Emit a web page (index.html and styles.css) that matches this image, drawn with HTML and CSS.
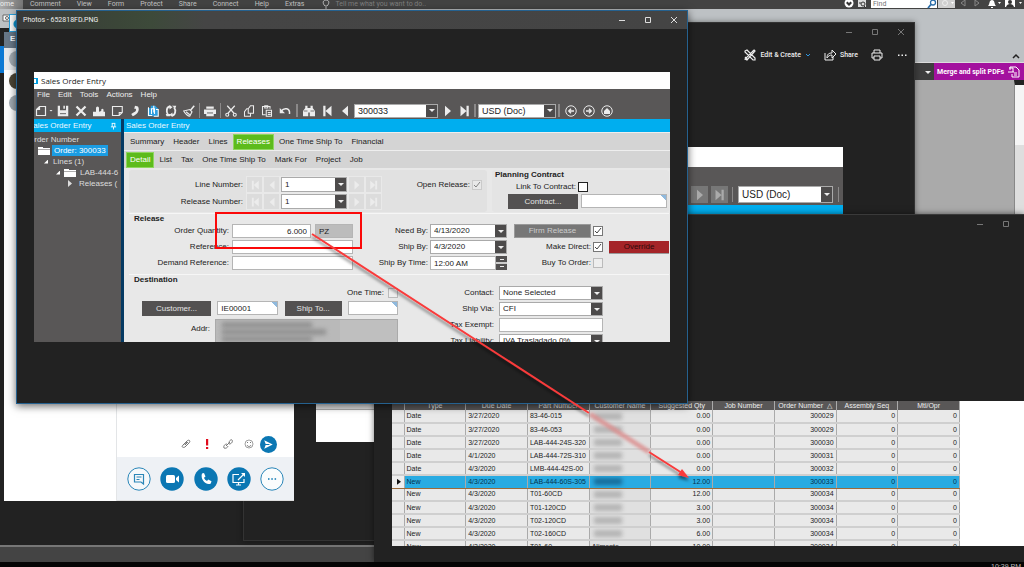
FILE: index.html
```html
<!DOCTYPE html>
<html lang="en">
<head>
<meta charset="utf-8">
<title>Sales Order Entry</title>
<link rel="stylesheet" href="styles.css">
</head>
<body>
<svg class="defs" aria-hidden="true">
  <symbol id="min" viewBox="0 0 8 8"><path d="M1 4.5h6" stroke="currentColor" fill="none"/></symbol>
  <symbol id="max" viewBox="0 0 8 8"><path d="M1.5 1.5h5v5h-5z" stroke="currentColor" fill="none"/></symbol>
  <symbol id="close" viewBox="0 0 8 8"><path d="M1 1l6 6M7 1L1 7" stroke="currentColor" fill="none"/></symbol>
  <symbol id="new" viewBox="0 0 16 16"><path d="M6 2h8v12H2V6zM6 2v4H2" fill="none" stroke="currentColor" stroke-width="1.6"/></symbol>
  <symbol id="save" viewBox="0 0 16 16"><path d="M1 1h3v6h8V1h3v14H1z" fill="currentColor"/><path d="M8.500 1h2v4h-2z" fill="currentColor"/><path d="M4 11h8v1.200H4z" fill="#595757"/></symbol>
  <symbol id="del" viewBox="0 0 16 16"><path d="M2 2l12 12M14 2L2 14" stroke="currentColor" stroke-width="3"/></symbol>
  <symbol id="people" viewBox="0 0 16 16"><path d="M0 15V9h4V4a2 2 0 014 0v5l3-1V6a2 2 0 013 0v3h2v6z" fill="currentColor"/></symbol>
  <symbol id="note" viewBox="0 0 16 16"><path d="M2 2h13v8l-4 4H2zM11 14v-4h4" fill="none" stroke="currentColor" stroke-width="1.500"/></symbol>
  <symbol id="phone" viewBox="0 0 16 16"><path d="M8 1l4 1c3 5-1 11-7 13l-2-3 3-2c3-1 4-3 3-5H7z" fill="currentColor"/></symbol>
  <symbol id="attach" viewBox="0 0 16 16"><path d="M1 4h4V1h6l4 4v10H1z" fill="#2f9fe0"/><path d="M2 3v11h5M9 1v9M6 12V5h4v7M12 6h3v9H9" fill="none" stroke="#fff" stroke-width="1.400"/></symbol>
  <symbol id="refresh" viewBox="0 0 16 16"><path d="M7 2C2 2 1 9 4 13M9 14c5 0 6-7 3-11" fill="none" stroke="currentColor" stroke-width="2.400"/><path d="M6 0l4 3-4 3zM10 10v6l-4-3zM1 12h6v3H2zM9 1h6l-1 3z" fill="currentColor"/></symbol>
  <symbol id="brush" viewBox="0 0 16 16"><path d="M15 1l-5 6" stroke="currentColor" stroke-width="2"/><path d="M1 8l8-2 3 3-3 6c-2 0-6-3-8-7zM4 9l5 4" fill="none" stroke="currentColor" stroke-width="1.500"/></symbol>
  <symbol id="print" viewBox="0 0 16 16"><path d="M3 2h10v3H3zM0 6h16v6h-3v3H3v-3H0z" fill="currentColor"/><path d="M4 10h8v1.200H4z" fill="#595757"/></symbol>
  <symbol id="cut" viewBox="0 0 16 16"><path d="M3 1l9 10M13 1L4 11" stroke="currentColor" stroke-width="1.600"/><circle cx="3" cy="13" r="2" fill="none" stroke="currentColor" stroke-width="1.500"/><circle cx="13" cy="13" r="2" fill="none" stroke="currentColor" stroke-width="1.500"/></symbol>
  <symbol id="copy" viewBox="0 0 16 16"><path d="M7 5l3-4h4v10H7zM7 5H5L2 9v6h8v-4M7 5v3" fill="none" stroke="currentColor" stroke-width="1.400"/></symbol>
  <symbol id="paste" viewBox="0 0 16 16"><path d="M6 13H2V2h10v3M5 1h4v3H5zM7 7h7v8H7zM9 10h4M9 12.500h4" fill="none" stroke="currentColor" stroke-width="1.400"/></symbol>
  <symbol id="undo" viewBox="0 0 16 16"><path d="M3 8c4-5 12-4 11 4" fill="none" stroke="currentColor" stroke-width="2"/><path d="M1 4v7h7z" fill="currentColor"/></symbol>
  <symbol id="find" viewBox="0 0 16 16"><path d="M3 1h3v3h4V1h3v3l3 4v7H9v-5H7v5H0V8l3-4z" fill="currentColor"/><path d="M1 8h5M10 8h5" stroke="#595757"/></symbol>
  <symbol id="first" viewBox="0 0 16 16"><path d="M3 1h3v14H3zM14 1v14L6 8z" fill="currentColor"/></symbol>
  <symbol id="prev" viewBox="0 0 16 16"><path d="M12 1v14L4 8z" fill="currentColor"/></symbol>
  <symbol id="next" viewBox="0 0 16 16"><path d="M4 1v14l8-7z" fill="currentColor"/></symbol>
  <symbol id="last" viewBox="0 0 16 16"><path d="M10 1h3v14h-3zM2 1v14l8-7z" fill="currentColor"/></symbol>
  <symbol id="back" viewBox="0 0 16 16"><circle cx="8" cy="8" r="7" fill="none" stroke="currentColor" stroke-width="1.300"/><path d="M12 8H5M8 5L5 8l3 3" fill="none" stroke="currentColor" stroke-width="1.800"/></symbol>
  <symbol id="fwd" viewBox="0 0 16 16"><circle cx="8" cy="8" r="7" fill="none" stroke="currentColor" stroke-width="1.300"/><path d="M4 8h7M8 5l3 3-3 3" fill="none" stroke="currentColor" stroke-width="1.800"/></symbol>
  <symbol id="home" viewBox="0 0 16 16"><circle cx="8" cy="8" r="7" fill="none" stroke="currentColor" stroke-width="1.300"/><path d="M4 8l4-4 4 4v4H4z" fill="currentColor"/></symbol>
  <symbol id="folder" viewBox="0 0 12 10"><path d="M0 1h5v1h7v1.500H0zM0 4h12v5H0z" fill="#fff"/></symbol>
</svg>

<main class="desktop">
  <section class="pdf" aria-label="PDF editor">
    <nav class="ribbon">
      <a class="home" href="#">ome</a>
      <a href="#">Comment</a><a href="#">View</a><a href="#">Form</a><a href="#">Protect</a><a href="#">Share</a><a href="#">Connect</a><a href="#">Help</a><a href="#">Extras</a>
      <svg class="bulb" viewBox="0 0 8 10"><path d="M3 7C0 4 1 1 4 1s4 3 1 6zM3 9h2" fill="none" stroke="#bbb"/></svg>
      <span class="tell">Tell me what you want to do..</span>
      <svg class="heart" viewBox="0 0 24 10"><circle cx="6" cy="3" r="4.500" fill="#fff"/><path d="M6 6L3 3l1.500-1.500L6 3l1.500-1.500L9 3z" fill="#333"/><path d="M15 0h8v7h-8z" fill="#ddd"/><circle cx="20" cy="4" r="2" fill="none" stroke="#333"/><path d="M16 3h2M21 6l2 2" stroke="#333"/></svg>
      <label class="find"><input type="text" placeholder="Find" aria-label="Find"><svg viewBox="0 0 10 10"><circle cx="6" cy="2.500" r="2.500" fill="none" stroke="#2a6ca8" stroke-width="1.300"/><path d="M4 4.500L1 8" stroke="#2a6ca8" stroke-width="1.800"/></svg></label>
      <svg class="tools" viewBox="0 0 86 10"><path d="M0 0h17v8H0z" fill="#cfcfcf"/><circle cx="7" cy="3" r="2.500" fill="none" stroke="#eee"/><path d="M13 2h3l-1.500 2z" fill="#fff"/><path d="M27 0v6l-4-3zM37 0v6l4-3z" fill="none" stroke="#888"/><path d="M50 6c2-2 1-6 4-6s2 4 4 6zM53 7h2v1h-2z" fill="#fff"/><path d="M60 2h3l-1.500 2zM81 2h3l-1.500 2z" fill="#fff"/><path d="M67 0h10v7H67z" fill="#fff"/><circle cx="72" cy="2" r="2" fill="#333"/><path d="M68 7c1-4 7-4 8 0z" fill="#333"/></svg>
    </nav>
    <div class="ribbon-body"><svg class="camera" viewBox="0 0 8 8"><path d="M1 1h7v6H1z" fill="#fff" stroke="#666"/><circle cx="5" cy="4" r="1.500" fill="none" stroke="#666"/></svg><svg viewBox="0 0 8 8"><path d="M1 6l3-3 3 3" fill="none" stroke="#222" stroke-width="1.500"/></svg></div>
    <div class="promo"><i></i><a href="#">Merge and split PDFs <svg viewBox="0 0 12 12"><path d="M2 4V1h6l3 3v7H4V8M0 6h6M1 2h4v4M6 7h3M6 9h3" fill="none" stroke="#fff"/></svg></a></div>
    <div class="doc"><div class="scroll"><span></span></div></div>
    <div class="status"></div>
    <div class="taskbar"><time>10:39 PM</time></div>
  </section>

  <section class="win photos-far" aria-label="Photos"><div class="strip"></div></section>

  <section class="win photos-back" aria-label="Photos">
    <header class="bar right">
      <button aria-label="Minimize"><svg><use href="#min"/></svg></button><button aria-label="Maximize"><svg><use href="#max"/></svg></button><button aria-label="Close"><svg><use href="#close"/></svg></button>
    </header>
    <div class="actions">
      <button><svg viewBox="0 0 12 12"><path d="M1 2l2-1 8 8v2H9L1 3zM10 1l1 1-8 9-2-1zM1 8l2 2M8 2l2 2" fill="none" stroke="#eee" stroke-width="1.200"/></svg>Edit &amp; Create<svg class="chev" viewBox="0 0 6 6"><path d="M1 2l2 2 2-2" fill="none" stroke="#2f95e0"/></svg></button>
      <button><svg viewBox="0 0 12 12"><path d="M1 4v7h8V8M3 9c0-4 2-5 5-5V1l4 4-4 4V6C6 6 4 7 3 9z" fill="none" stroke="#eee"/></svg>Share</button>
      <button aria-label="Print"><svg viewBox="0 0 12 12"><path d="M3 4V1h6v3M3 9H1V4h10v5H9M3 7h6v4H3z" fill="none" stroke="#eee"/></svg></button>
      <button aria-label="More"><svg viewBox="0 0 12 12"><path d="M2 5.500h1.500v1.500H2zM5.500 5.500H7v1.500H5.500zM9 5.500h1.500v1.500H9z" fill="#eee"/></svg></button>
    </div>
    <div class="back-image">
      <div class="white-title"></div>
      <div class="back-tools">
        <button aria-label="Next"><svg><use href="#next"/></svg></button><button aria-label="Last"><svg><use href="#last"/></svg></button>
        <i class="grip"></i>
        <div class="combo"><select aria-label="Currency"><option>USD (Doc)</option></select></div>
        <i class="grip"></i>
      </div>
      <div class="blue"></div>
      <div class="back-row"></div>
    </div>
  </section>

  <div class="win peek" aria-hidden="true"></div>

  <section class="win chat" aria-label="Chat">
    <div class="people">
      <div class="people-head">E</div>
      <div class="person on"><i></i></div><div class="person photo"><i></i></div><div class="person"><i></i></div>
    </div>
    <div class="talk">
      <div class="compose">
        <button aria-label="Attach file"><svg viewBox="0 0 10 10"><path d="M2 6l4-4c2-2 4 0 2 2L4 8C2 9 0 8 2 6l4-3M4 6l3-3" fill="none" stroke="#777"/></svg></button>
        <button aria-label="High importance"><svg viewBox="0 0 10 10"><path d="M4 0h2.200v6.500H4zM4 8h2.200v2H4z" fill="#e00b1c"/></svg></button>
        <button aria-label="Link"><svg viewBox="0 0 10 10"><path d="M1 9c-1-2 1-4 3-4M1 9c2 1 4-1 4-2M6 4c0-2 2-4 3-3s0 4-3 4M3 7l4-4" fill="none" stroke="#777"/></svg></button>
        <button aria-label="Emoji"><svg viewBox="0 0 10 10"><circle cx="5" cy="5" r="4" fill="none" stroke="#888" stroke-width=".8"/><path d="M3 6c1 2 3 2 4 0M3 3.500h1M6 3.500h1" fill="none" stroke="#777"/></svg></button>
        <button class="send" aria-label="Send"><svg viewBox="0 0 18 18"><circle cx="9" cy="9" r="9" fill="#0b77b3"/><path d="M4.500 4.500l9 4.500-9 4.500L6 9.600h4V8.400H6z" fill="#fff"/></svg></button>
      </div>
      <div class="calls">
        <button aria-label="Message"><svg viewBox="0 0 24 24"><circle cx="12" cy="12" r="11.200" fill="#f5f8fa" stroke="#2a86b8"/><path d="M7.500 7.500h9v9.500l-2.500-2H7.500zM9.500 10h5M9.500 12.500h3" fill="none" stroke="#2a86b8" stroke-width="1.200"/></svg></button>
        <button aria-label="Video"><svg viewBox="0 0 24 24"><circle cx="12" cy="12" r="11.700" fill="#0b77b3"/><rect x="6" y="8" width="9" height="8" rx="1.500" fill="#fff"/><path d="M16 11l3-2.500v7L16 13z" fill="#fff"/></svg></button>
        <button aria-label="Call"><svg viewBox="0 0 24 24"><circle cx="12" cy="12" r="11.700" fill="#0b77b3"/><path d="M8 6.500l2-.5 1.500 3.500-1.500 1.200c.5 1.500 1.500 2.500 3 3.200l1.200-1.400 3.300 1.800-.7 2.200C12 19 6 12 8 6.500z" fill="#fff"/></svg></button>
        <button aria-label="Present"><svg viewBox="0 0 24 24"><circle cx="12" cy="12" r="11.700" fill="#0b77b3"/><path d="M12 7.500H6v8h11V12M9 18h5M11.500 16v2M11 13l6-6" fill="none" stroke="#fff" stroke-width="1.200"/><path d="M14 6h4v4z" fill="#fff"/></svg></button>
        <button aria-label="More"><svg viewBox="0 0 24 24"><circle cx="12" cy="12" r="11.200" fill="#fafcfd" stroke="#2a86b8"/><path d="M8 12h1.500M11.300 12h1.500M14.600 12h1.500" stroke="#0b77b3" stroke-width="1.500"/></svg></button>
      </div>
    </div>
  </section>

  <section class="win photos-grid" aria-label="Photos">
    <header class="bar right"><button aria-label="Minimize"><svg><use href="#min"/></svg></button><button aria-label="Maximize"><svg><use href="#max"/></svg></button></header>
    <div class="sheet">
      <table>
        <thead><tr><th></th><th>Type</th><th>Due Date</th><th>Part Number</th><th>Customer Name</th><th>Suggested Qty</th><th>Job Number</th><th>Order Number &nbsp;△</th><th>Assembly Seq</th><th>Mtl/Opr</th></tr></thead>
        <tbody>
          <tr><td></td><td>Date</td><td>3/27/2020</td><td>83-46-015</td><td><i></i></td><td>0.00</td><td></td><td>300029</td><td>0</td><td>0</td></tr>
          <tr><td></td><td>Date</td><td>3/27/2020</td><td>83-46-053</td><td><i></i></td><td>0.00</td><td></td><td>300029</td><td>0</td><td>0</td></tr>
          <tr><td></td><td>Date</td><td>3/27/2020</td><td>LAB-444-24S-320</td><td><i></i></td><td>0.00</td><td></td><td>300030</td><td>0</td><td>0</td></tr>
          <tr><td></td><td>Date</td><td>4/1/2020</td><td>LAB-444-72S-310</td><td><i></i></td><td>0.00</td><td></td><td>300031</td><td>0</td><td>0</td></tr>
          <tr><td></td><td>Date</td><td>4/3/2020</td><td>LMB-444-42S-00</td><td><i></i></td><td>0.00</td><td></td><td>300032</td><td>0</td><td>0</td></tr>
          <tr class="sel"><td><b></b></td><td>New</td><td>4/3/2020</td><td>LAB-444-60S-305</td><td><i></i></td><td>12.00</td><td></td><td>300033</td><td>0</td><td>0</td></tr>
          <tr><td></td><td>New</td><td>4/3/2020</td><td>T01-60CD</td><td><i></i></td><td>12.00</td><td></td><td>300034</td><td>0</td><td>0</td></tr>
          <tr><td></td><td>New</td><td>4/3/2020</td><td>T01-120CD</td><td><i></i></td><td>3.00</td><td></td><td>300034</td><td>0</td><td>0</td></tr>
          <tr><td></td><td>New</td><td>4/3/2020</td><td>T02-120CD</td><td><i></i></td><td>3.00</td><td></td><td>300034</td><td>0</td><td>0</td></tr>
          <tr><td></td><td>New</td><td>4/3/2020</td><td>T02-160CD</td><td><i></i></td><td>6.00</td><td></td><td>300034</td><td>0</td><td>0</td></tr>
          <tr><td></td><td>New</td><td>4/3/2020</td><td>T01-60</td><td>Alimento</td><td>10.00</td><td></td><td>300034</td><td>0</td><td>0</td></tr>
        </tbody>
      </table>
    </div>
  </section>

  <section class="win photos-front" aria-label="Photos">
    <header class="bar">
      <h1>Photos - 652818FD.PNG</h1>
      <button aria-label="Minimize"><svg><use href="#min"/></svg></button><button aria-label="Maximize"><svg><use href="#max"/></svg></button><button aria-label="Close"><svg><use href="#close"/></svg></button>
    </header>
    <div class="app">
      <div class="app-title"><i></i>Sales Order Entry</div>
      <nav class="menu"><a href="#">File</a><a href="#">Edit</a><a href="#">Tools</a><a href="#">Actions</a><a href="#">Help</a></nav>
      <div class="tools-row">
        <button class="narrow" aria-label="New"><svg><use href="#new"/></svg></button><i class="drop"></i>
        <button aria-label="Save"><svg><use href="#save"/></svg></button>
        <button aria-label="Delete"><svg><use href="#del"/></svg></button>
        <button aria-label="Contacts"><svg><use href="#people"/></svg></button>
        <button aria-label="Note"><svg><use href="#note"/></svg></button>
        <button aria-label="Call"><svg><use href="#phone"/></svg></button>
        <button aria-label="Attachment"><svg><use href="#attach"/></svg></button>
        <button aria-label="Refresh"><svg><use href="#refresh"/></svg></button>
        <button aria-label="Clear"><svg><use href="#brush"/></svg></button>
        <i class="grip"></i>
        <button aria-label="Print"><svg><use href="#print"/></svg></button>
        <i class="grip"></i>
        <button aria-label="Cut"><svg><use href="#cut"/></svg></button>
        <button aria-label="Copy"><svg><use href="#copy"/></svg></button>
        <button aria-label="Paste"><svg><use href="#paste"/></svg></button>
        <button aria-label="Undo"><svg><use href="#undo"/></svg></button>
        <i class="grip wide"></i>
        <button aria-label="Search"><svg><use href="#find"/></svg></button>
        <button aria-label="First"><svg><use href="#first"/></svg></button>
        <button aria-label="Previous"><svg><use href="#prev"/></svg></button>
        <div class="combo order"><select aria-label="Order"><option>300033</option></select></div>
        <button aria-label="Next"><svg><use href="#next"/></svg></button>
        <button class="tight" aria-label="Last"><svg><use href="#last"/></svg></button>
        <i class="grip wide"></i>
        <div class="combo currency"><select aria-label="Currency"><option>USD (Doc)</option></select></div>
        <i class="grip wide"></i>
        <button aria-label="Back"><svg><use href="#back"/></svg></button>
        <button aria-label="Forward"><svg><use href="#fwd"/></svg></button>
        <button aria-label="Home"><svg><use href="#home"/></svg></button>
      </div>
      <div class="panes">
        <aside class="tree">
          <div class="blue"><span class="cut">Sales Order Entry</span><svg viewBox="0 0 8 8"><path d="M2 1h4M2.500 1v4M5.500 1v4M1 5h6M4 5v3" stroke="#fff" fill="none"/></svg></div>
          <ul>
            <li class="cut-item">Order Number</li>
            <li class="lvl1"><svg class="fold"><use href="#folder"/></svg><a class="on" href="#">Order: 300033</a></li>
            <li class="lvl2"><i class="open"></i>Lines (1)</li>
            <li class="lvl3"><i class="open"></i><svg class="fold"><use href="#folder"/></svg>LAB-444-6</li>
            <li class="lvl4"><i class="closed"></i>Releases (</li>
          </ul>
        </aside>
        <div class="entry">
          <div class="blue">Sales Order Entry</div>
          <nav class="tabs"><a href="#">Summary</a><a href="#">Header</a><a href="#">Lines</a><a class="on" href="#">Releases</a><a href="#">One Time Ship To</a><a href="#">Financial</a></nav>
          <nav class="tabs sub"><a class="on" href="#">Detail</a><a href="#">List</a><a href="#">Tax</a><a href="#">One Time Ship To</a><a href="#">Mark For</a><a href="#">Project</a><a href="#">Job</a></nav>
          <form>
            <div class="top">
              <div class="group nums">
                <label for="line">Line Number:</label>
                <div class="stepper"><button type="button" aria-label="First line"><svg><use href="#first"/></svg></button><button type="button" aria-label="Previous line"><svg><use href="#prev"/></svg></button><div class="combo"><select id="line"><option>1</option></select></div><button type="button" aria-label="Next line"><svg><use href="#next"/></svg></button><button type="button" aria-label="Last line"><svg><use href="#last"/></svg></button></div>
                <div class="check"><label for="open">Open Release:</label><input id="open" class="dim" type="checkbox" checked></div>
                <label for="rel">Release Number:</label>
                <div class="stepper"><button type="button" aria-label="First release"><svg><use href="#first"/></svg></button><button type="button" aria-label="Previous release"><svg><use href="#prev"/></svg></button><div class="combo"><select id="rel"><option>1</option></select></div><button type="button" aria-label="Next release"><svg><use href="#next"/></svg></button><button type="button" aria-label="Last release"><svg><use href="#last"/></svg></button></div>
              </div>
              <div class="group contract">
                <h2>Planning Contract</h2>
                <div class="check"><label for="link">Link To Contract:</label><input id="link" class="strong" type="checkbox"></div>
                <div class="pair"><button type="button" class="dark">Contract...</button><input class="key" type="text" aria-label="Contract"></div>
              </div>
            </div>
            <fieldset class="release">
              <h2>Release</h2>
              <div class="rows a">
                <label for="qty">Order Quantity:</label><div class="qty"><input id="qty" type="text" value="6.000"><input class="unit" type="text" value="PZ" aria-label="Unit"></div>
                <label for="ref">Reference:</label><input id="ref" type="text">
                <label for="dem">Demand Reference:</label><input id="dem" type="text">
              </div>
              <div class="rows b">
                <label for="need">Need By:</label><div class="combo"><select id="need"><option>4/13/2020</option></select></div>
                <label for="ship">Ship By:</label><div class="combo"><select id="ship"><option>4/3/2020</option></select></div>
                <label for="time">Ship By Time:</label><div class="spin"><input id="time" type="text" value="12:00 AM"><i></i></div>
              </div>
              <div class="rows c">
                <button type="button" class="dark firm">Firm Release</button><input type="checkbox" checked aria-label="Firm Release"><span></span>
                <label for="make">Make Direct:</label><input id="make" type="checkbox" checked><button type="button" class="override">Override</button>
                <label for="buy">Buy To Order:</label><input id="buy" class="dim" type="checkbox"><span></span>
              </div>
            </fieldset>
            <fieldset class="dest">
              <h2>Destination</h2>
              <div class="left">
                <div class="check"><label for="once">One Time:</label><input id="once" class="dim" type="checkbox"></div>
                <div class="cust"><button type="button" class="dark">Customer...</button><input class="key" type="text" value="IE00001" aria-label="Customer"><button type="button" class="dark">Ship To...</button><input class="key" type="text" aria-label="Ship to"></div>
                <div class="addr"><span>Addr:</span><div class="address"><div class="smudge"><i></i><i></i><i></i></div></div></div>
              </div>
              <div class="rows d">
                <label for="con">Contact:</label><div class="combo"><select id="con"><option>None Selected</option></select></div>
                <label for="via">Ship Via:</label><div class="combo"><select id="via"><option>CFI</option></select></div>
                <label for="ex">Tax Exempt:</label><input id="ex" type="text">
                <label for="li">Tax Liability:</label><div class="combo"><select id="li"><option>IVA Trasladado 0%</option></select></div>
              </div>
            </fieldset>
          </form>
        </div>
      </div>
    </div>
  </section>

  <svg class="notes" viewBox="0 0 1024 567" aria-hidden="true">
    <defs>
      <filter id="soft" x="-20%" y="-20%" width="140%" height="140%"><feGaussianBlur stdDeviation="1.500"/></filter>
      <filter id="shade" x="-10%" y="-10%" width="120%" height="120%"><feDropShadow dx="0" dy="3" stdDeviation="1.500" flood-opacity=".5"/></filter>
    </defs>
    <path d="M216 213h145v35H216z" fill="none" stroke="#fb0909" stroke-width="2"/>
    <g filter="url(#shade)" stroke="#f93b3b" stroke-width="2"><path d="M312 234L589 413M649 452L682 473" fill="none"/><path d="M689 478l-11-3 4-6z" fill="#f93b3b" stroke="none"/></g>
    <path d="M590 414L649 452" stroke="#dc8f8f" stroke-width="5" opacity=".85" filter="url(#soft)"/>
  </svg>
</main>
</body>
</html>
```
FILE: styles.css
```css
* { box-sizing: border-box; }
body { margin: 0; font-family: "Liberation Sans", Arial, sans-serif; font-size: 8px; line-height: 12px; color: #222; background: #000; }
.defs { position: absolute; width: 0; height: 0; }
button, input, select { font: inherit; color: inherit; margin: 0; padding: 0; border: 0; background: none; border-radius: 0; appearance: none; min-width: 0; outline: 0; }
a { color: inherit; text-decoration: none; }
h1, h2 { margin: 0; font-size: inherit; }
fieldset { border: 0; margin: 0; padding: 0; min-width: 0; }
ul { list-style: none; margin: 0; padding: 0; }
svg { display: block; flex: none; }
.desktop { position: relative; height: 100vh; overflow: hidden; }
.win { position: absolute; background: #222; }

/* PDF editor */
.pdf { height: 100%; display: flex; flex-direction: column; }
.ribbon { display: flex; align-items: center; height: 9px; background: #434343; color: #c0c0c0; font: 7px/8px Roboto, sans-serif; overflow: hidden; padding-bottom: 1px; }
.ribbon a { margin-right: 16px; }
.ribbon .home { width: 23px; height: 9px; margin-right: 7px; color: #eee; background: linear-gradient(90deg, #aaa, #777); }
.bulb { width: 8px; height: 10px; margin-left: 2px; }
.tell { margin-left: 5px; color: #7d7d7d; }
.heart { width: 24px; height: 10px; margin-left: auto; margin-top: 2px; }
.find { display: flex; width: 66px; height: 8px; margin: 0 1px 0 4px; background: #fff; }
.find input { flex: 1; padding-left: 2px; font-size: 7px; line-height: 8px; height: 8px; }
.find svg { width: 10px; height: 10px; }
.tools { width: 86px; height: 10px; margin-top: 2px; }
.ribbon-body { height: 53px; background: #bdc1c4; display: flex; justify-content: space-between; align-items: flex-end; padding: 5px 4px 2px 2px; }
.ribbon-body svg { width: 8px; height: 8px; }
.ribbon-body .camera { align-self: flex-start; }
.promo { display: flex; justify-content: flex-end; height: 18px; background: #3e3e3e; border-top: 1px solid #ddd; }
.promo i { width: 6px; height: 3px; margin: 8px 3px 0 0; background: #eee; clip-path: polygon(0 0, 100% 0, 50% 100%); }
.promo a { display: flex; align-items: center; justify-content: space-between; width: 90px; padding: 0 4px 0 3px; color: #fff; background: #a3119e; font: bold 7px/10px Roboto, sans-serif; white-space: nowrap; }
.promo svg { width: 12px; height: 12px; }
.doc { flex: 1; display: flex; justify-content: flex-end; background: #aaa; }
.scroll { width: 10px; background: #dedede; border-left: 1px solid #888; border-top: 5px solid #222; }
.scroll span { display: block; height: 60px; background: #f5f5f5; }
.status { height: 17px; background: #444; border-top: 2px solid #777; }
.taskbar { display: flex; justify-content: flex-end; height: 5px; background: #050505; overflow: hidden; color: #ccc; font-size: 7px; }
.taskbar time { margin-right: 3px; line-height: 10px; }

/* background photo windows */
.photos-far { left: 0; top: 28px; width: 374px; bottom: 22px; }
.strip { width: 4px; height: 27px; margin-top: 18px; background: #0a78d4; }
.photos-back { left: 243px; right: 109px; top: 22px; bottom: 26px; border: 1px solid #333; box-shadow: 0 0 6px #0006; display: flex; flex-direction: column; }
.bar { display: flex; align-items: center; height: 18px; color: #ddd; }
.bar.right { justify-content: flex-end; color: #777; }
.bar button { width: 26px; height: 18px; display: grid; place-items: center; }
.bar button svg { width: 8px; height: 8px; }
.actions { display: flex; justify-content: flex-end; align-items: center; gap: 13px; height: 27px; padding-right: 6px; color: #eee; font: 500 7px/10px Roboto, sans-serif; }
.actions button { display: flex; align-items: center; gap: 4px; }
.actions svg { width: 12px; height: 12px; }
.actions .chev { width: 6px; height: 6px; }
.back-image { flex: 1; display: flex; flex-direction: column; margin: 79px 71px 98px 72px; background: #fff; }
.back-image .white-title { height: 20px; }
.back-tools { display: flex; justify-content: flex-end; align-items: center; gap: 4px; height: 38px; padding: 17px 3px 0 0; background: #595757; }
.back-tools button { width: 17px; height: 17px; margin-right: -1px; background: #777; display: grid; place-items: center; color: #aaa; }
.back-tools button svg { width: 12px; height: 12px; }
.back-tools .combo { width: 95px; height: 17px; font-size: 10px; }
.blue { display: flex; justify-content: space-between; align-items: center; height: 13px; padding: 0 2px; background: #00aeef; color: #eaf8ff; }
.back-image { padding-bottom: 32px; }
.back-row { margin-top: auto; height: 7px; background: #ddd; border-bottom: 1px solid #aaa; }

/* chat */
.peek { left: 9px; top: 14px; width: 20px; height: 18px; border: 1px solid #2aa3df; background: radial-gradient(circle at 8px 9px, #0d9ddb 4px, #fff 5px); }
.chat { left: 4px; top: 32px; width: 290px; height: 469px; background: #fff; display: flex; }
.people { width: 113px; border-right: 1px solid #e3e5e7; }
.people-head { height: 16px; padding-left: 6px; background: #687888; color: #fff; line-height: 14px; font-weight: bold; }
.person { height: 22px; padding: 3px 5px; }
.person.on { background: #e5e8ec; }
.person i { display: block; width: 16px; height: 16px; border-radius: 50%; background: #a2abb3; }
.person.photo i { background: #4d4636; }
.talk { flex: 1; display: flex; flex-direction: column; justify-content: flex-end; }
.compose { display: flex; align-items: center; justify-content: flex-end; gap: 11px; height: 26px; padding: 0 17px 0 0; }
.compose svg { width: 10px; height: 10px; }
.compose .send { margin-left: -5px; }
.compose .send svg { width: 17px; height: 17px; }
.calls { display: flex; align-items: center; justify-content: space-between; height: 44px; padding: 0 10px; background: #eef1f5; border-bottom: 1px solid #ddd; }
.calls svg { width: 24px; height: 24px; }

/* grid window */
.photos-grid { left: 374px; right: 0; top: 214px; bottom: 5px; border-top: 1px solid #3a3a3a; box-shadow: 0 0 6px #0008; }
.photos-grid .bar { padding-right: 5px; }
.sheet { height: 145px; margin: 168px 0 0 18px; background: #fff; overflow: hidden; }
table { border-collapse: collapse; table-layout: fixed; width: 568px; font-size: 7px; line-height: 10px; }
th, td { padding: 0; overflow: hidden; white-space: nowrap; border-right: 1px solid #aaa; }
th { height: 9px; color: #eee; background: #595757; font-weight: normal; line-height: 9px; text-align: center; }
th:first-child { width: 12px; }
td { height: 13px; padding: 0 2px; background: #e9e9e9; border-bottom: 2px solid #cfcfcf; }
td:nth-child(n+6) { text-align: right; }
td:nth-child(5) { background: #e0e0e0; }
td i { display: block; width: 28px; height: 7px; margin-left: 2px; background: #b4b4b4; filter: blur(2px); }
.sel td { background: #29abe2; border-bottom: 1px solid #9a6b3c; color: #06324c; }
.sel td:first-child { background: #eee; }
.sel td i { background: #176c9a; }
.sel b { display: block; width: 4px; height: 6px; margin-left: 3px; background: #111; clip-path: polygon(0 0, 100% 50%, 0 100%); }

/* front photo window */
.photos-front { left: 16px; top: 10px; width: 672px; height: 394px; border: 1px solid #25618f; box-shadow: 0 2px 8px #0009; }
.photos-front .bar { background: linear-gradient(90deg, #393939, #3b4638 15%, #3d4a3a 20%, #454545 28%, #444); }
h1 { flex: 1; padding-left: 6px; font: 7px/12px Roboto, sans-serif; color: #eee; }
.app { display: flex; flex-direction: column; height: 270px; margin: 43px 17px 0; background: #e8e8e8; overflow: hidden; }
.app-title { display: flex; align-items: center; gap: 3px; height: 17px; flex: none; background: #fff; font-family: "Open Sans", sans-serif; }
.app-title i { width: 4px; height: 6px; border: 1px solid #009fe3; border-width: 1px 2px 1px 0; }
.menu { display: flex; gap: 8px; height: 13px; flex: none; padding: 0 3px; background: #595757; color: #eee; }
.tools-row { display: flex; align-items: center; height: 17px; flex: none; background: #595757; color: #ececec; }
.tools-row button { width: 18px; display: grid; place-items: center; }
.tools-row button svg { width: 12px; height: 12px; }
.tools-row .narrow { width: 13px; }
.tools-row .tight { width: 15px; }
.drop { width: 4px; height: 2px; margin: 0 1px 0 2px; background: #eee; clip-path: polygon(0 0, 100% 0, 50% 100%); }
.grip { width: 1px; height: 15px; margin: 0 1px; background: #8b8989; }
.grip.wide { width: 2px; height: 13px; margin: 0 2px; }
.combo { display: flex; height: 14px; border: 1px solid #aaa; background: #fff; color: #222; }
.combo select { flex: 1; padding-left: 3px; line-height: 12px; text-align: left; }
.combo::after { content: ""; width: 11px; pointer-events: none; background: #4d4b4b url('data:image/svg+xml,<svg xmlns="http://www.w3.org/2000/svg" viewBox="0 0 6 3"><path d="M0 0h6L3 3z" fill="%23eee"/></svg>') center / 6px 3px no-repeat; }
.combo.order { width: 84px; font-size: 9px; margin-right: 1px; }
.combo.currency { width: 78px; font-size: 9px; }
.panes { display: flex; flex: 1; min-height: 0; }
.tree { width: 87px; background: #595757; color: #ddd; overflow: hidden; }
.tree .blue { padding: 0 4px 0 0; }
.tree .blue svg { width: 7px; height: 8px; }
.tree .cut, .cut-item { text-indent: -6px; overflow: hidden; }
.tree ul { padding-top: 2px; }
.tree li { display: flex; align-items: center; gap: 4px; height: 11px; line-height: 11px; white-space: nowrap; }
.tree .cut-item { display: block; }
.fold { width: 12px; height: 10px; }
.tree .on { background: #1b9ce2; color: #fff; padding: 0 2px; }
.lvl1 { padding-left: 4px; }
.tree li.lvl1 { gap: 2px; }
.lvl2 { padding-left: 10px; }
.tree li.lvl2 { gap: 5px; }
.lvl3 { padding-left: 22px; }
.lvl4 { padding-left: 34px; }
.tree li.lvl4 { gap: 7px; }
.open { width: 4px; height: 4px; background: #fff; clip-path: polygon(100% 0, 100% 100%, 0 100%); }
.closed { width: 4px; height: 7px; background: #ddd; clip-path: polygon(0 0, 100% 50%, 0 100%); }
.entry { flex: 1; min-width: 0; border-left: 3px solid #063a63; background: #e8e8e8; }
.tabs { display: flex; align-items: center; gap: 1px; height: 18px; padding: 0 2px; background: #d4d4d4; border-top: 1px solid #eee; }
.tabs a { padding: 0 4px; line-height: 16px; }
.tabs .on { padding: 0 3px; height: 16px; line-height: 13px; background: #5dbb1c; color: #fff; border: 1px solid #8fd65f; }
form { padding: 2px 1px 0 5px; }
h2 { font-weight: bold; line-height: 10px; }
label, .addr span { text-align: right; white-space: nowrap; line-height: 14px; }
form input[type="text"] { height: 14px; width: 100%; padding: 0 3px; border: 1px solid #b5b5b5; background: #fff; line-height: 12px; }
form input[type="checkbox"] { width: 10px; height: 10px; border: 1px solid #777; background: #fff; flex: none; }
form input[type="checkbox"]:checked { background: #fff url('data:image/svg+xml,<svg xmlns="http://www.w3.org/2000/svg" viewBox="0 0 8 8"><path d="M1 4l2 2 4-5" fill="none" stroke="%23444"/></svg>') center / 8px 8px no-repeat; }
form input[type="checkbox"].dim { border-color: #bbb; background-color: #eee; }
form input[type="checkbox"].dim:checked { opacity: .6; }
form input[type="checkbox"].strong { border-color: #222; }
form input[type="text"].key { background: linear-gradient(225deg, #8fb9dd 4px, #fff 4px); }
.dark { height: 15px; background: #535151; color: #e4e4e4; text-align: center; }
.check { display: flex; align-items: center; justify-content: flex-end; gap: 2px; }
.top { display: flex; gap: 5px; height: 44px; border-bottom: 1px solid #f6f6f6; }
.group { height: 42px; background: #e1e1e1; border-radius: 3px; }
.nums { width: 358px; display: grid; grid-template-columns: 114px 136px 1fr; grid-auto-rows: 17px; column-gap: 3px; padding: 6px 5px 0 0; align-items: center; }
.stepper { display: flex; align-items: center; justify-content: center; gap: 2px; height: 17px; background: #e9e9e9; }
.stepper button { width: 15px; height: 15px; background: #dcdcdc; color: #ececec; display: grid; place-items: center; }
.stepper svg { width: 10px; height: 10px; }
.stepper .combo { width: 66px; height: 15px; }
.contract { flex: 1; padding: 0 2px 0 3px; background: #e4e4e4; }
.contract .check { justify-content: flex-start; height: 13px; padding-left: 21px; }
.contract label { line-height: 12px; }
.pair { display: grid; grid-template-columns: 70px 1fr; column-gap: 3px; padding: 1px 0 0 13px; }
.release { display: grid; grid-template-columns: 224px 154px 1fr; align-content: start; height: 61px; border-bottom: 1px solid #f6f6f6; }
.release h2, .dest h2 { grid-column: 1 / -1; padding-left: 5px; }
.rows { display: grid; grid-auto-rows: 14px; row-gap: 2px; align-items: center; align-content: start; }
.a { grid-template-columns: 100px 121px; column-gap: 3px; }
.qty { display: grid; grid-template-columns: 79px 38px; column-gap: 4px; }
#qty { text-align: right; }
form input[type="text"].unit { background: #bcbcbc; }
.b { grid-template-columns: 75px 77px; column-gap: 2px; }
.spin { display: flex; }
.spin input { flex: 1; }
.spin i { width: 11px; height: 14px; background: linear-gradient(#eee, #eee) center 3px / 4px 1px no-repeat, linear-gradient(#eee, #eee) center 10px / 4px 1px no-repeat, linear-gradient(#535151 6px, #ccc 6px, #ccc 8px, #535151 8px); }
.c { grid-template-columns: 77px 10px 60px; column-gap: 2px; padding-left: 7px; }
.c > :nth-child(3n) { margin-left: 4px; width: 60px; }
.firm { height: 14px; background: #777; color: #ccc; border: 1px solid #999; }
.override { height: 13px; background: #a52428; color: #2c0a0b; border-bottom: 1px solid #999; }
.dest { display: grid; grid-template-columns: 269px 205px; align-content: start; height: 80px; }
.dest h2 { margin-bottom: 1px; }
.left .check { height: 14px; gap: 4px; }
.cust { display: grid; grid-template-columns: 69px 61px 57px 50px; justify-content: space-between; padding: 1px 0 0 13px; }
.addr { display: grid; grid-template-columns: 81px 1fr; column-gap: 5px; padding-top: 3px; }
.addr span { line-height: 20px; }
.address { height: 26px; border: 1px solid #aaa; background: #bfbfbf; }
.smudge { width: 124px; height: 26px; padding: 2px 6px; background: #b9b9b9; display: grid; gap: 1px; align-content: start; }
.smudge i { width: 90px; height: 6px; background: #929292; filter: blur(2px); }
.smudge i:nth-child(2) { width: 104px; }
.d { grid-template-columns: 96px 104px; column-gap: 5px; }

/* markup over the screenshots */
.notes { position: absolute; left: 0; top: 0; width: 1024px; height: 567px; pointer-events: none; }
```
